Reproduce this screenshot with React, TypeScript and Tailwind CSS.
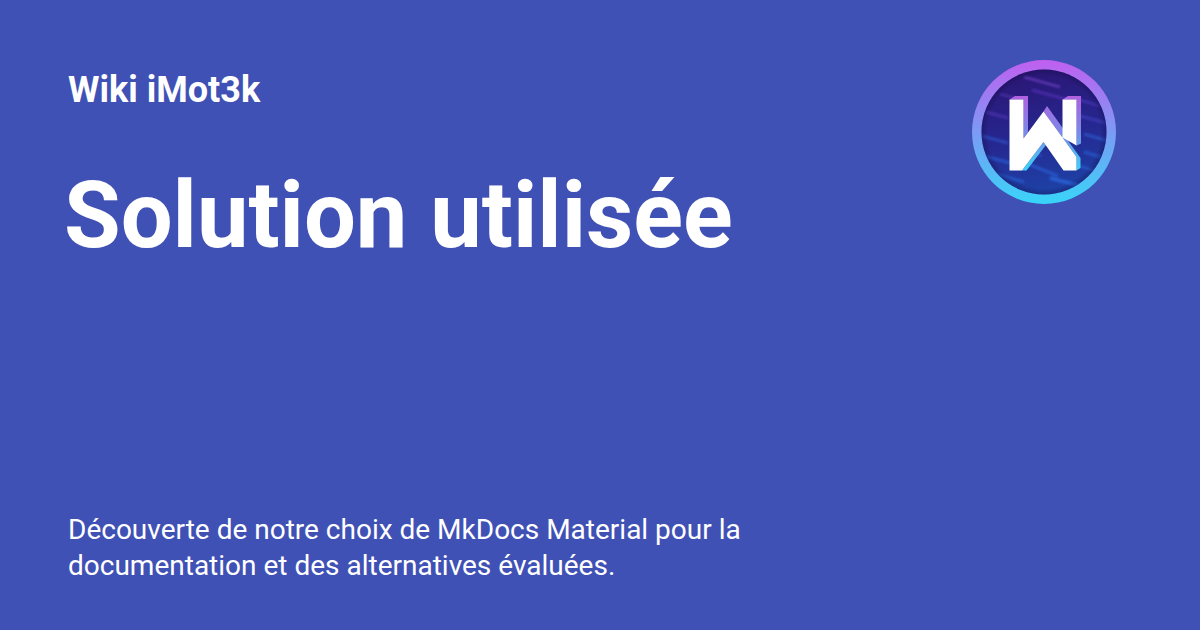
const streaks = [
  [52, 17, 88, 27, "#6a3fc0", 2.5],
  [28, 34, 50, 40, "#5a35b0", 2],
  [60, 30, 104, 42, "#4f2fb0", 3],
  [108, 40, 128, 46, "#4a35b8", 2.5],
  [14, 52, 36, 58, "#4a35b0", 3],
  [108, 56, 134, 63, "#3f3fb8", 3],
  [112, 74, 136, 81, "#2f55c8", 3],
  [10, 76, 36, 83, "#2f4fc0", 3],
  [12, 96, 38, 103, "#2a5cd0", 3],
  [56, 92, 70, 96, "#2a50c8", 2.5],
  [112, 92, 132, 98, "#2a5cd0", 3],
  [24, 114, 52, 122, "#2a5cd0", 3],
  [56, 104, 86, 116, "#2a5cd0", 3],
  [78, 118, 116, 128, "#2f6ae0", 3.5],
  [108, 106, 126, 112, "#2a5cd0", 2.5],
] as const;

function Logo() {
  return (
    <svg width="144" height="144" viewBox="0 0 144 144" className="shrink-0">
      <defs>
        <linearGradient id="ring" x1="0.5" y1="0" x2="0.5" y2="1">
          <stop offset="0" stopColor="#c05ff0" />
          <stop offset="1" stopColor="#38d5f8" />
        </linearGradient>
        <linearGradient id="disc" x1="0.4" y1="0" x2="0.6" y2="1">
          <stop offset="0" stopColor="#2c1470" />
          <stop offset="0.5" stopColor="#26268f" />
          <stop offset="1" stopColor="#1b48ac" />
        </linearGradient>
        <radialGradient id="rim" cx="0.5" cy="0.5" r="0.5">
          <stop offset="0.78" stopColor="#120a40" stopOpacity="0" />
          <stop offset="1" stopColor="#120a40" stopOpacity="0.85" />
        </radialGradient>
        <linearGradient id="edge" gradientUnits="userSpaceOnUse" x1="0" y1="36" x2="0" y2="110">
          <stop offset="0" stopColor="#b060e0" />
          <stop offset="0.5" stopColor="#7a8ae8" />
          <stop offset="1" stopColor="#38d5f8" />
        </linearGradient>
        <filter id="soft" x="-10%" y="-10%" width="120%" height="120%">
          <feGaussianBlur stdDeviation="0.8" />
        </filter>
        <clipPath id="discClip">
          <circle cx="72" cy="72" r="62.5" />
        </clipPath>
      </defs>
      <circle cx="72" cy="72" r="72" fill="url(#ring)" />
      <g clipPath="url(#discClip)">
        <rect width="144" height="144" fill="url(#disc)" />
        <g filter="url(#soft)">
          {streaks.map(([x1, y1, x2, y2, color, width], i) => (
            <line key={i} x1={x1} y1={y1} x2={x2} y2={y2} stroke={color} strokeWidth={width} strokeOpacity="0.75" />
          ))}
        </g>
        <rect width="144" height="144" fill="url(#rim)" />
      </g>
      <path
        d="M37.5 39.5 L43 36 H56 V72 L51.5 78.5 V39.5 Z M71.5 51.5 L75 46 L95 74 L90.5 77.5 Z M90.5 39.5 L96 36 H109 V83.5 L104.5 85.5 V39.5 Z"
        fill="url(#edge)"
      />
      <path d="M90.5 77.5 L94 78 L108.5 98 V108 L104.5 110.5 V97 Z M52 108 L71.5 82 L74 85 L54.5 110.5 H50 Z" fill="url(#edge)" />
      <path
        d="M37.5 39.5 H51.5 V78.5 L71.5 51.5 L90.5 77.5 V39.5 H104.5 V85.5 L90.5 77.5 L104.5 97 V110.5 H91.5 L71.5 82 L50 110.5 H37.5 Z"
        fill="#fff"
      />
    </svg>
  );
}

export default function App() {
  return (
    <div className="flex h-[630px] w-[1200px] flex-col justify-between overflow-hidden bg-[#4051b5] pt-[60px] pr-[84px] pb-[46px] pl-[68px] font-['Roboto',sans-serif] text-white">
      <div className="flex items-start justify-between">
        <div>
          <div className="text-[36px] leading-[60px] font-bold">Wiki iMot3k</div>
          <h1 className="mt-[41px] ml-[-4px] text-[92px] leading-[110px] font-bold">Solution utilisée</h1>
        </div>
        <Logo />
      </div>
      <p className="w-[720px] text-[28px] leading-[36px]">
        Découverte de notre choix de MkDocs Material pour la documentation et des alternatives évaluées.
      </p>
    </div>
  );
}
